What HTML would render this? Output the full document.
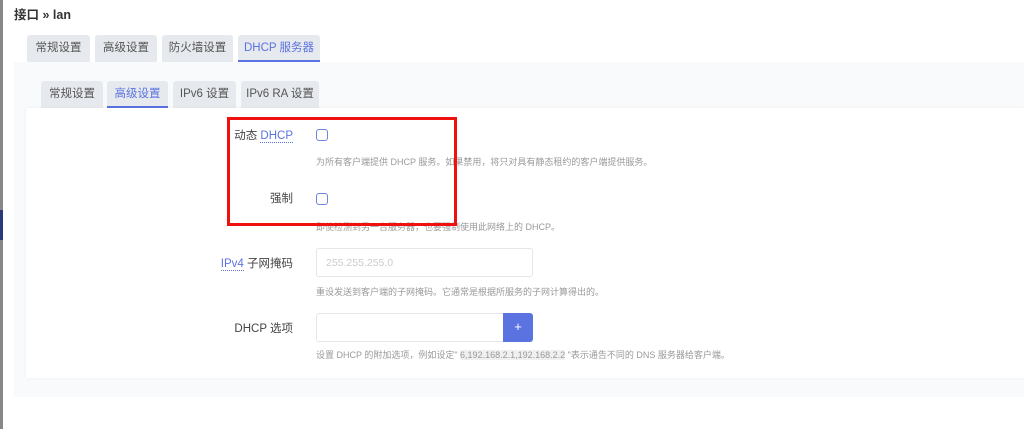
<!DOCTYPE html>
<html><head><meta charset="utf-8"><style>
*{box-sizing:border-box;margin:0;padding:0}
body{width:1024px;height:429px;background:#fff;font-family:"Liberation Sans","Noto Sans CJK SC",sans-serif;position:relative;overflow:hidden;color:#333}
.abs{position:absolute}
.tab{position:absolute;background:#e6e9ed;border-radius:3px 3px 0 0;font-size:11.5px;color:#555;text-align:center;line-height:26px;height:27px}
.tab.act{color:#5b73e0;border-bottom:2px solid #5b73e0}
.lbl{position:absolute;right:731px;font-size:11.5px;color:#444;text-align:right;white-space:nowrap}
.help{position:absolute;left:316px;font-size:9px;color:#999;white-space:nowrap}
.cb{position:absolute;left:316px;width:12px;height:12px;border:1.5px solid #7084e4;border-radius:3px;background:#fff}
.inp{position:absolute;border:1px solid #e4e6ea;border-radius:3px;background:#fff}
</style></head><body>
<div class="abs" style="left:0;top:0;width:3px;height:429px;background:#888"></div>
<div class="abs" style="left:0;top:210px;width:3px;height:30px;background:#2a3a78"></div>
<div class="abs" style="left:14px;top:4px;font-size:12.5px;font-weight:bold;color:#333">接口 » lan</div>
<div class="abs" style="left:14px;top:62px;width:1010px;height:335px;background:#f9fafb"></div>
<div class="tab" style="left:27px;top:35px;width:63px">常规设置</div>
<div class="tab" style="left:95px;top:35px;width:62px">高级设置</div>
<div class="tab" style="left:162px;top:35px;width:71px">防火墙设置</div>
<div class="tab act" style="left:238px;top:35px;width:82px">DHCP 服务器</div>
<div class="tab" style="left:41px;top:81px;width:62px">常规设置</div>
<div class="tab act" style="left:107px;top:81px;width:61px">高级设置</div>
<div class="tab" style="left:173px;top:81px;width:63px">IPv6 设置</div>
<div class="tab" style="left:241px;top:81px;width:78px">IPv6 RA 设置</div>
<div class="abs" style="left:26px;top:108px;width:998px;height:270px;background:#fff;box-shadow:0 0 3px rgba(0,0,0,.05)"></div>
<div class="lbl" style="top:127px">动态 <span style="color:#5b73e0;border-bottom:1px dotted #5b73e0">DHCP</span></div>
<div class="cb" style="top:129px"></div>
<div class="help" style="top:155px">为所有客户端提供 DHCP 服务。如果禁用，将只对具有静态租约的客户端提供服务。</div>
<div class="lbl" style="top:190px">强制</div>
<div class="cb" style="top:193px"></div>
<div class="help" style="top:220px">即使检测到另一台服务器，也要强制使用此网络上的 DHCP。</div>
<div class="lbl" style="top:255px"><span style="color:#5b73e0;border-bottom:1px dotted #5b73e0">IPv4</span> 子网掩码</div>
<div class="inp" style="left:316px;top:248px;width:217px;height:29px;font-size:10.5px;color:#ccc;padding:8px 0 0 9px">255.255.255.0</div>
<div class="help" style="top:285px">重设发送到客户端的子网掩码。它通常是根据所服务的子网计算得出的。</div>
<div class="lbl" style="top:320px">DHCP 选项</div>
<div class="inp" style="left:316px;top:313px;width:190px;height:29px"></div>
<div class="abs" style="left:503px;top:313px;width:30px;height:29px;background:#5b73e0;border-radius:0 3px 3px 0;color:#fff;font-size:13px;text-align:center;line-height:28px">+</div>
<div class="help" style="top:348px">设置 DHCP 的附加选项，例如设定" <span style="background:#f0f0f0">6,192.168.2.1,192.168.2.2</span> "表示通告不同的 DNS 服务器给客户端。</div>
<div class="abs" style="left:227px;top:117px;width:230px;height:109px;border:3px solid #f01010"></div>
</body></html>
